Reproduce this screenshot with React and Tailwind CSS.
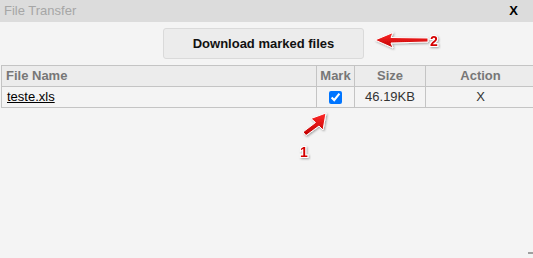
import React from "react";

const Arrows = () => (
  <svg
    className="absolute inset-0 pointer-events-none"
    width="533"
    height="258"
    viewBox="0 0 533 258"
  >
    <defs>
      <linearGradient id="red" x1="0" y1="0" x2="0" y2="1">
        <stop offset="0" stopColor="#ff2a2a" />
        <stop offset="1" stopColor="#c00000" />
      </linearGradient>
      <filter id="sh" x="-20%" y="-20%" width="150%" height="150%">
        <feDropShadow dx="1" dy="1" stdDeviation="0.8" floodColor="#000" floodOpacity="0.35" />
      </filter>
    </defs>
    {/* arrow 2 */}
    <path
      d="M375 40 L393 32.5 L391 37.5 L428 38 L428 42 L391 43 L393 48 Z"
      fill="url(#red)"
      stroke="#fff"
      strokeWidth="1"
      strokeLinejoin="round"
      filter="url(#sh)"
    />
    <text
      x="430"
      y="46"
      fontFamily="Liberation Sans, Arial, sans-serif"
      fontWeight="bold"
      fontSize="14"
      fill="#d40000"
      stroke="#fff"
      strokeWidth="2"
      paintOrder="stroke"
      filter="url(#sh)"
    >
      2
    </text>
    {/* arrow 1 */}
    <path
      d="M326 113 L323 130 L319 126 L306 135.5 L303 132 L315.5 122.5 L311 118.5 Z"
      fill="url(#red)"
      stroke="#fff"
      strokeWidth="1"
      strokeLinejoin="round"
      filter="url(#sh)"
    />
    <text
      x="300"
      y="157"
      fontFamily="Liberation Sans, Arial, sans-serif"
      fontWeight="bold"
      fontSize="14"
      fill="#d40000"
      stroke="#fff"
      strokeWidth="2"
      paintOrder="stroke"
      filter="url(#sh)"
    >
      1
    </text>
  </svg>
);

const App = () => {
  return (
    <div
      className="relative w-[533px] h-[258px] overflow-hidden bg-[#f4f4f4]"
      style={{ fontFamily: '"Liberation Sans", Arial, sans-serif' }}
    >
      <div className="flex items-center justify-between h-[22px] bg-[#dcdcdc] pl-[4px] pr-[15px]">
        <span className="text-[13px] text-[#a6a6a6]">File Transfer</span>
        <span className="text-[13px] font-bold text-black">X</span>
      </div>

      <div className="pt-[6px] pl-[163px]">
        <button
          type="button"
          className="w-[201px] h-[31px] rounded-[3px] border border-[#dadada] bg-[#ececec] text-[13px] font-bold text-[#111]"
        >
          Download marked files
        </button>
      </div>

      <table className="mt-[6px] ml-[1px] w-[535px] border-collapse text-[13px]">
        <thead>
          <tr className="h-[21px] bg-[#ececec] text-[#777] font-bold">
            <th className="border border-[#c4c4c4] text-left pl-[4px] font-bold w-[315px]">
              File Name
            </th>
            <th className="border border-[#c4c4c4] font-bold w-[38px]">Mark</th>
            <th className="border border-[#c4c4c4] font-bold w-[71px]">Size</th>
            <th className="border border-[#c4c4c4] font-bold">Action</th>
          </tr>
        </thead>
        <tbody>
          <tr className="h-[20px] text-[#222]">
            <td className="border border-[#c4c4c4] pl-[5px]">
              <span className="underline text-black">teste.xls</span>
            </td>
            <td className="border border-[#c4c4c4] text-center">
              <input
                type="checkbox"
                defaultChecked
                className="w-[13px] h-[13px] align-middle accent-[#0075ff]"
              />
            </td>
            <td className="border border-[#c4c4c4] text-center text-[#333]">46.19KB</td>
            <td className="border border-[#c4c4c4] text-center text-[#333]">X</td>
          </tr>
        </tbody>
      </table>

      <div className="absolute right-[0px] bottom-[4px] w-[5px] h-[2px] bg-[#a0a0a0]" />
      <Arrows />
    </div>
  );
};

export default App;
